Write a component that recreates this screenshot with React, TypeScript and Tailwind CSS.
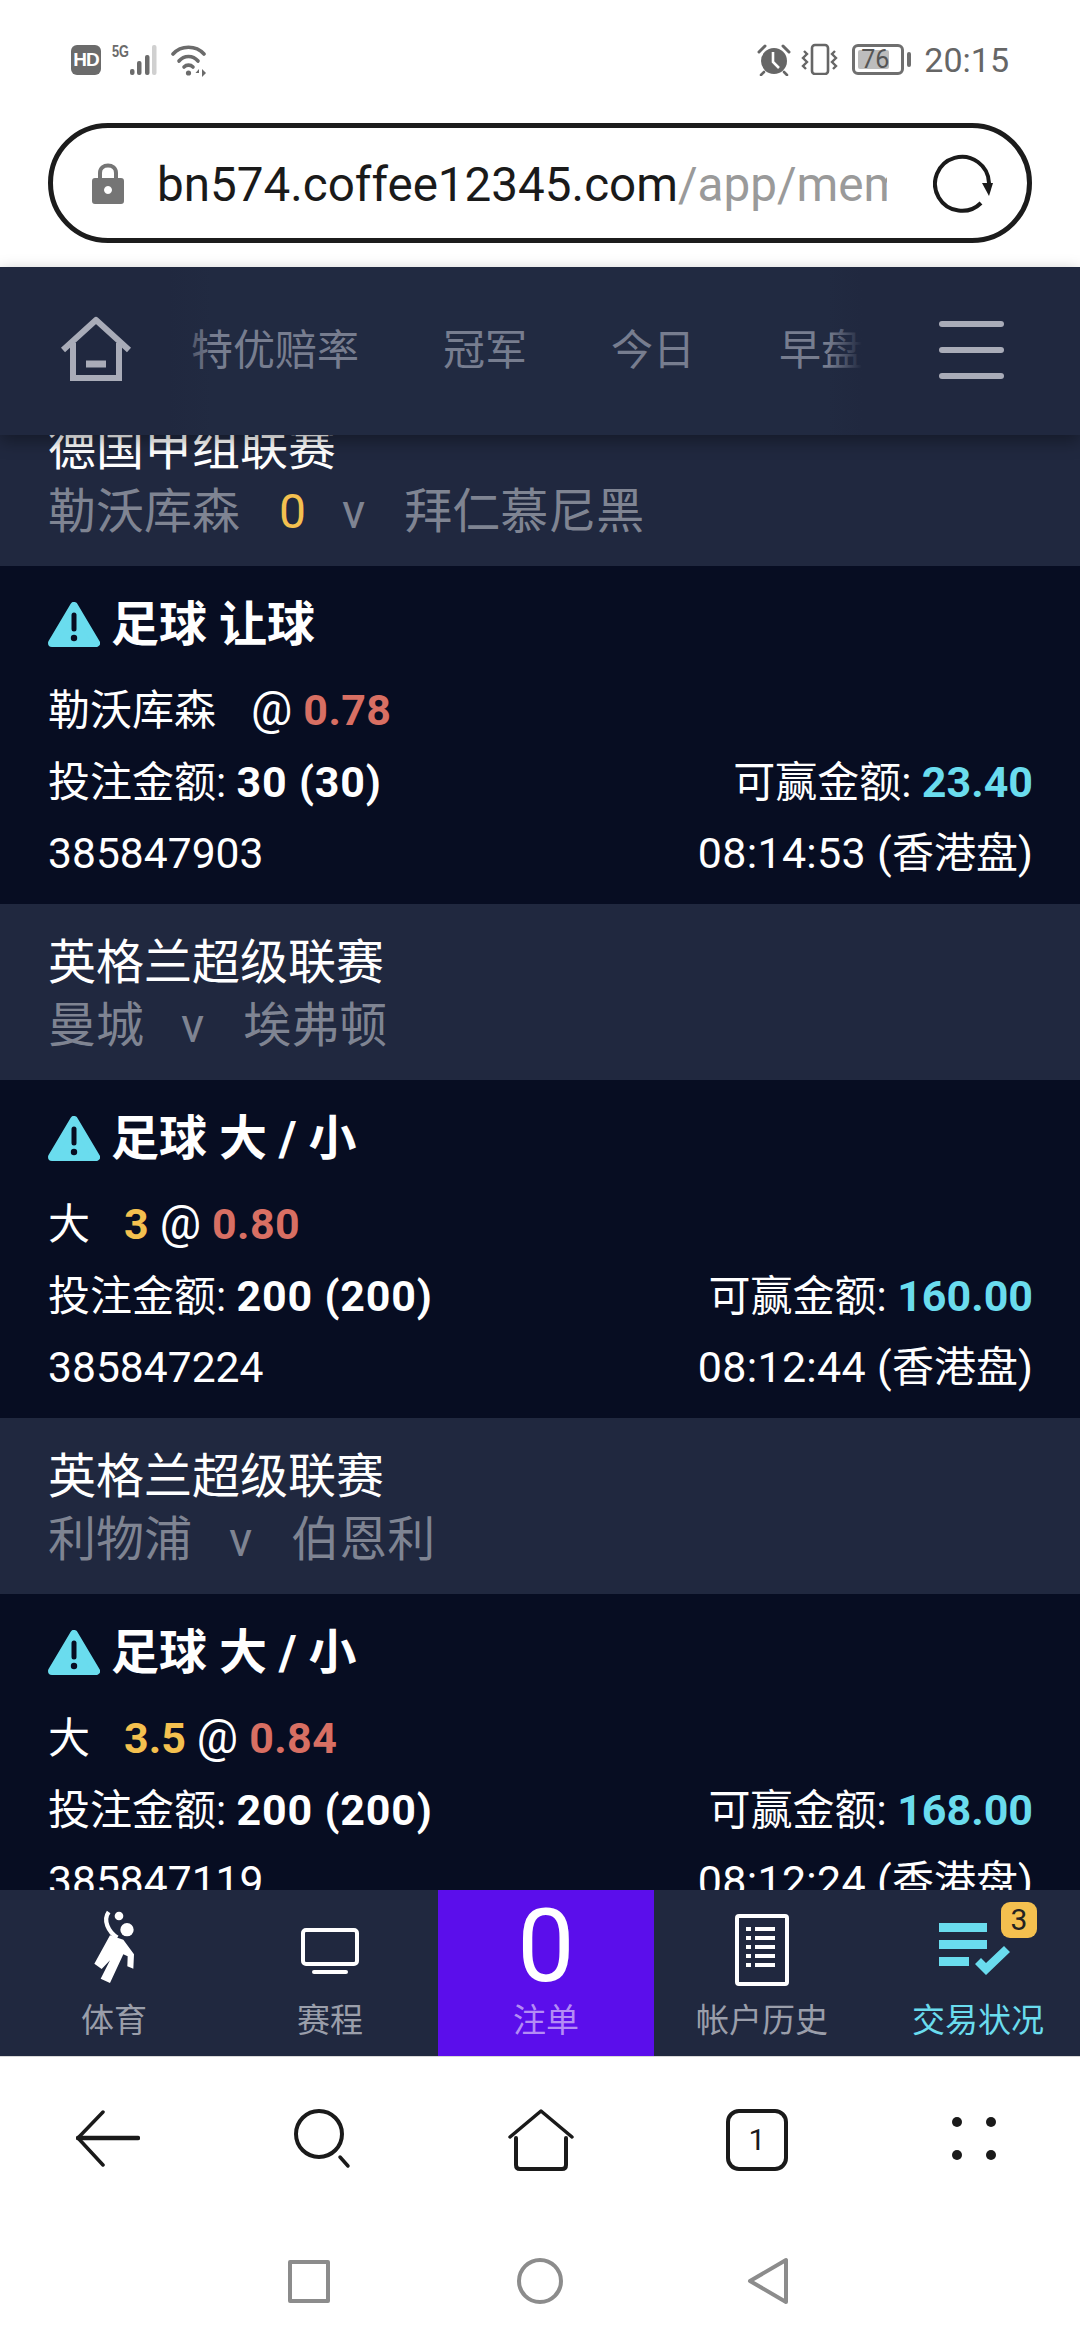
import React from 'react';

const cjk = "font-['Roboto','Noto_Sans_CJK_SC',sans-serif]";

type Bet = {
  league: string;
  home: string;
  hdpTop?: string;
  away: string;
  title: string;
  pick: string;
  hdp?: string;
  odds: string;
  stake: string;
  win: string;
  id: string;
  time: string;
};

const bets: Bet[] = [
  {
    league: '德国甲组联赛',
    home: '勒沃库森',
    hdpTop: '0',
    away: '拜仁慕尼黑',
    title: '足球 让球',
    pick: '勒沃库森',
    odds: '0.78',
    stake: '30 (30)',
    win: '23.40',
    id: '385847903',
    time: '08:14:53',
  },
  {
    league: '英格兰超级联赛',
    home: '曼城',
    away: '埃弗顿',
    title: '足球 大 / 小',
    pick: '大',
    hdp: '3',
    odds: '0.80',
    stake: '200 (200)',
    win: '160.00',
    id: '385847224',
    time: '08:12:44',
  },
  {
    league: '英格兰超级联赛',
    home: '利物浦',
    away: '伯恩利',
    title: '足球 大 / 小',
    pick: '大',
    hdp: '3.5',
    odds: '0.84',
    stake: '200 (200)',
    win: '168.00',
    id: '385847119',
    time: '08:12:24',
  },
];

const StatusBar = () => (
  <div className="h-[116px] shrink-0 flex items-start justify-between pl-[71px] pr-[71px] pt-[43px] text-[#666]">
    <div className="flex items-start">
      <div className="w-[30px] h-[30px] mt-[2px] rounded-[6px] bg-[#6b6b6b] text-white text-[19px] font-bold leading-[30px] text-center font-['Liberation_Sans',sans-serif] tracking-[-1px]">
        HD
      </div>
      <svg width="50" height="34" viewBox="0 0 50 34" className="ml-[11px]" fill="#6b6b6b">
        <text x="0" y="14" fontSize="17" fontWeight="700" fontFamily="Liberation Sans" textLength="17" lengthAdjust="spacingAndGlyphs">5G</text>
        <rect x="18" y="26" width="4.5" height="6" rx="2" />
        <rect x="25" y="18" width="4.5" height="14" rx="2" />
        <rect x="33" y="12" width="4.5" height="20" rx="2" />
        <rect x="40" y="2" width="4.5" height="30" rx="2" fill="#d0d0d0" />
      </svg>
      <svg width="38" height="34" viewBox="0 0 38 34" className="ml-[9px]" fill="none" stroke="#6b6b6b" strokeWidth="3.6" strokeLinecap="round">
        <path d="M2 11 C 10 2, 25 2, 33 11" />
        <path d="M8 18 C 13 12, 22 12, 27 18" />
        <path d="M13 24 C 15.5 21.5, 19.5 21.5, 22 24" />
        <circle cx="17.5" cy="30" r="2.6" fill="#6b6b6b" stroke="none" />
        <path d="M28 26 L24.5 30 L28 30 Z M31 34 L31 26 L35 30 Z" fill="#6b6b6b" stroke="none" />
      </svg>
    </div>
    <div className="flex items-start">
      <svg width="34" height="32" viewBox="0 0 34 32" className="mt-[1px]">
        <circle cx="17" cy="17" r="13" fill="#666" />
        <path d="M16 8 V18 L22 24" stroke="#fff" strokeWidth="2.6" fill="none" />
        <path d="M2 8 L8 2 M32 8 L26 2" stroke="#666" strokeWidth="3" strokeLinecap="round" />
        <path d="M7 28 L4 31 M27 28 L30 31" stroke="#666" strokeWidth="2.6" strokeLinecap="round" />
      </svg>
      <svg width="38" height="32" viewBox="0 0 38 32" className="ml-[10px]" fill="none" stroke="#666" strokeWidth="2.6">
        <rect x="11" y="2" width="16" height="29" rx="3" />
        <path d="M3 8 L6 11 L2 15 L6 19 L2 23 L5 26" strokeWidth="2.4" />
        <path d="M34 8 L31 11 L35 15 L31 19 L35 23 L32 26" strokeWidth="2.4" />
      </svg>
      <div className="ml-[13px] flex items-center h-[32px]">
        <div className="w-[52px] h-[31px] rounded-[6px] border-[3px] border-[#6f6f6f] p-[3px] relative">
          <div className="w-[31px] h-full bg-[#bdbdbd] rounded-[2px]" />
          <span className="absolute inset-0 text-center text-[25px] leading-[25px] text-[#555] font-['Roboto',sans-serif] pr-[6px]">76</span>
        </div>
        <div className="w-[4px] h-[15px] ml-[3px] rounded-[2px] bg-[#6f6f6f]" />
      </div>
      <span className="ml-[13px] text-[34px] leading-[34px] font-['Roboto',sans-serif] text-[#666]">20:15</span>
    </div>
  </div>
);

const AddressBar = () => (
  <div className="h-[151px] shrink-0 px-[48px] pt-[7px]">
    <div className="h-[120px] rounded-[60px] border-[5px] border-[#1c1c1c] flex items-center pl-[39px]">
      <svg width="32" height="41" viewBox="0 0 32 41" fill="#757575">
        <path d="M8 17 V10 C8 0, 24 0, 24 10 V17" fill="none" stroke="#757575" strokeWidth="4" />
        <path fillRule="evenodd" d="M3 15 H29 A3 3 0 0 1 32 18 V38 A3 3 0 0 1 29 41 H3 A3 3 0 0 1 0 38 V18 A3 3 0 0 1 3 15 Z M16 23 A4 4 0 1 0 16.01 23 Z" />
      </svg>
      <div className="ml-[33px] w-[730px] overflow-hidden whitespace-nowrap text-[47.6px] leading-[60px] pt-[3px] font-['Roboto',sans-serif] text-[#1a1a1a]">
        bn574.coffee12345.com<span className="text-[#9a9a9a]">/app/member</span>
      </div>
      <svg width="62" height="62" viewBox="0 0 62 62" className="ml-[46px] shrink-0" fill="none" stroke="#1a1a1a" strokeWidth="4">
        <path d="M56 31 A 27 27 0 1 0 48 51" />
        <path d="M49 31 L60 31 L56 44 Z" fill="#1a1a1a" stroke="none" />
      </svg>
    </div>
  </div>
);

const NavHeader = () => (
  <div className="h-[168px] shrink-0 flex items-center bg-[#20283f] shadow-[0_6px_16px_rgba(0,0,0,0.35)] relative z-10">
    <div className="w-[168px] h-full flex items-center pl-[60px] pb-[4px]">
      <svg width="72" height="66" viewBox="0 0 72 66" fill="none" stroke="#a9acb8" strokeWidth="6">
        <path d="M3 34 L36 4 L69 34" strokeLinejoin="round" />
        <path d="M13 27 V62 H59 V27" />
        <path d="M26 48 H46" strokeWidth="7" />
      </svg>
    </div>
    <div className="relative w-[694px] h-full overflow-hidden bg-[#212a41]">
      <div className={`flex items-center h-full gap-[84px] pl-[23px] pb-[2px] text-[42px] text-[#777d8f] whitespace-nowrap ${cjk}`}>
        <span>特优赔率</span>
        <span>冠军</span>
        <span>今日</span>
        <span>早盘</span>
      </div>
      <div className="absolute inset-y-0 left-0 w-[44px] bg-gradient-to-r from-[#20283f] to-transparent" />
      <div className="absolute inset-y-0 right-0 w-[34px] bg-gradient-to-l from-[#20283f] to-transparent" />
    </div>
    <div className="flex-1 flex flex-col items-center gap-[20px] pb-[3px]">
      <div className="w-[65px] h-[6px] rounded-[3px] bg-[#a9acb8]" />
      <div className="w-[65px] h-[6px] rounded-[3px] bg-[#a9acb8]" />
      <div className="w-[65px] h-[6px] rounded-[3px] bg-[#a9acb8]" />
    </div>
  </div>
);

const WarnIcon = () => (
  <svg width="52" height="46" viewBox="0 0 52 46" className="shrink-0">
    <path d="M26 4 L48 41 H4 Z" fill="#6adcee" stroke="#6adcee" strokeWidth="8" strokeLinejoin="round" />
    <path d="M26 13 V27" stroke="#070d22" strokeWidth="5" strokeLinecap="round" />
    <circle cx="26" cy="36" r="3.2" fill="#070d22" />
  </svg>
);

const BetRow = ({ bet }: { bet: Bet }) => (
  <>
    <div className="h-[176px] bg-[#20283f] pl-[48px] pt-[27px] text-[48px] leading-[63px]">
      <div className="text-white">{bet.league}</div>
      <div className="text-[#7f8492] flex whitespace-nowrap">
        <span>{bet.home}</span>
        {bet.hdpTop && <span className="ml-[39px] text-[#f4c04f]">{bet.hdpTop}</span>}
        <span className={bet.hdpTop ? 'ml-[36px]' : 'ml-[37px]'}>v</span>
        <span className="ml-[39px]">{bet.away}</span>
      </div>
    </div>
    <div className="h-[338px] bg-[#070d22] pl-[48px] pr-[47px] pt-[30px] text-[42px] leading-[71.7px] text-white">
      <div className="flex items-center h-[58px] gap-[11px] mb-[21px]">
        <WarnIcon />
        <span className="text-[48px] font-bold leading-[58px]">{bet.title}</span>
      </div>
      <div className="whitespace-nowrap">
        <span>{bet.pick}</span>
        {bet.hdp && <span className="ml-[34px] text-[43px] font-bold text-[#f4c04f]">{bet.hdp}</span>}
        <span className={bet.hdp ? 'ml-[11px] text-[46px] leading-[46px]' : 'ml-[35px] text-[46px] leading-[46px]'}>@</span>
        <span className="ml-[11px] text-[43px] font-bold tracking-[0.4px] text-[#d86f63]">{bet.odds}</span>
      </div>
      <div className="flex justify-between">
        <span>投注金额: <b className="text-[43px] tracking-[0.8px]">{bet.stake}</b></span>
        <span>可赢金额: <b className="text-[43px] text-[#6adcee]">{bet.win}</b></span>
      </div>
      <div className="flex justify-between">
        <span className="text-[42.6px]">{bet.id}</span>
        <span><span className="text-[43px] tracking-[0.3px]">{bet.time} (</span>香港盘<span className="text-[43px]">)</span></span>
      </div>
    </div>
  </>
);

const TabBar = () => (
  <div className={`h-[167px] shrink-0 grid grid-cols-[repeat(5,216px)] pl-[6px] overflow-hidden bg-[#20283f] border-b-[1px] border-[#d8d8d8] text-[33px] leading-[40px] text-[#9a9eaa] ${cjk}`}>
    <div className="flex flex-col items-center">
      <div className="h-[111px] flex items-end pb-[14px] pl-[2px]">
        <svg width="50" height="80" viewBox="90 30 150 240" fill="#fff">
          <circle cx="177" cy="57" r="13" />
          <circle cx="201" cy="98" r="20" />
          <path d="M146 45 C 128 70, 145 105, 172 122" fill="none" stroke="#fff" strokeWidth="13" />
          <path d="M150 115 L190 128 L222 172 L220 215 L202 208 L203 178 L190 172 L150 258 L122 245 L150 190 L125 216 L103 200 Z" />
        </svg>
      </div>
      <span>体育</span>
    </div>
    <div className="flex flex-col items-center">
      <div className="h-[111px] flex flex-col items-center pt-[38px]">
        <div className="w-[58px] h-[38px] rounded-[5px] border-[4px] border-white" />
        <div className="w-[36px] h-[4px] mt-[4px] rounded-[2px] bg-white" />
      </div>
      <span>赛程</span>
    </div>
    <div className="flex flex-col items-center bg-[#5b0eeb] text-[#b48cf5]">
      <div className="h-[111px] pt-[4px] text-[102px] leading-[104px] text-white font-['Roboto',sans-serif]">0</div>
      <span>注单</span>
    </div>
    <div className="flex flex-col items-center">
      <div className="h-[111px] flex items-start pt-[24px]">
        <svg width="54" height="72" viewBox="0 0 54 72" fill="#fff">
          <rect x="2" y="2" width="50" height="68" rx="2" fill="none" stroke="#fff" strokeWidth="4" />
          <rect x="11" y="13" width="5" height="4" /><rect x="20" y="13" width="20" height="4" />
          <rect x="11" y="22" width="5" height="4" /><rect x="20" y="22" width="20" height="4" />
          <rect x="11" y="31" width="5" height="4" /><rect x="20" y="31" width="20" height="4" />
          <rect x="11" y="40" width="5" height="4" /><rect x="20" y="40" width="20" height="4" />
          <rect x="11" y="49" width="5" height="4" /><rect x="20" y="49" width="20" height="4" />
        </svg>
      </div>
      <span>帐户历史</span>
    </div>
    <div className="flex flex-col items-center text-[#6adcee] relative">
      <div className="h-[111px] flex items-start pt-[33px] pr-[7px]">
        <svg width="72" height="56" viewBox="0 0 72 56" fill="#6adcee">
          <rect x="0" y="0" width="48" height="9" />
          <rect x="0" y="17" width="48" height="9" />
          <rect x="0" y="34" width="30" height="9" />
          <path d="M36 41 L42 35 L47 40 L65 23 L71 29 L47 52 Z" />
        </svg>
      </div>
      <span>交易状况</span>
      <div className="absolute top-[12px] right-[49px] w-[36px] h-[36px] rounded-[9px] bg-[#f4c04f] text-[#222] text-[30px] leading-[36px] text-center font-['Roboto',sans-serif]">3</div>
    </div>
  </div>
);

const BrowserBar = () => (
  <div className="h-[283px] shrink-0 bg-white flex flex-col">
    <div className="flex items-start h-[156px] pt-[52px] pl-[76px]">
      <svg width="64" height="60" viewBox="0 0 64 60" fill="none" stroke="#1a1a1a" strokeWidth="3.5" strokeLinecap="round">
        <path d="M27 3 L2 29 L27 56" />
        <path d="M2 29 H62" strokeWidth="4.5" />
      </svg>
      <svg width="60" height="60" viewBox="0 0 60 60" className="ml-[154px]" fill="none" stroke="#1a1a1a" strokeWidth="4" strokeLinecap="round">
        <circle cx="25" cy="25" r="23" />
        <path d="M46 48 L54 57" strokeWidth="3.5" />
      </svg>
      <svg width="66" height="62" viewBox="0 0 66 62" className="ml-[154px]" fill="none" stroke="#1a1a1a" strokeWidth="3.5" strokeLinecap="round" strokeLinejoin="round">
        <path d="M2 28 L33 2 L64 28" />
        <path d="M8 29 V56 Q8 60 12 60 H54 Q58 60 58 56 V29" strokeWidth="4" />
      </svg>
      <div className="ml-[152px] w-[62px] h-[62px] rounded-[13px] border-[4px] border-[#1a1a1a] flex items-center justify-center text-[30px] leading-[30px] text-[#1a1a1a] font-['Roboto',sans-serif]">1</div>
      <div className="ml-[164px] mt-[8px] grid grid-cols-2 gap-x-[24px] gap-y-[23px]">
        <div className="w-[10px] h-[10px] rounded-full bg-[#1a1a1a]" />
        <div className="w-[10px] h-[10px] rounded-full bg-[#1a1a1a]" />
        <div className="w-[10px] h-[10px] rounded-full bg-[#1a1a1a]" />
        <div className="w-[10px] h-[10px] rounded-full bg-[#1a1a1a]" />
      </div>
    </div>
    <div className="flex items-start pl-[288px] pt-[47px]">
      <div className="w-[42px] h-[43px] rounded-[2px] border-[4px] border-[#8c8c8c]" />
      <div className="ml-[187px] -mt-[2px] w-[46px] h-[46px] rounded-full border-[4px] border-[#8c8c8c]" />
      <svg width="42" height="48" viewBox="0 0 42 48" className="ml-[184px] -mt-[3px]" fill="none" stroke="#8c8c8c" strokeWidth="4" strokeLinejoin="round">
        <path d="M39 3 V45 L3 24 Z" />
      </svg>
    </div>
  </div>
);

export default function App() {
  return (
    <div className={`w-[1080px] h-[2340px] flex flex-col bg-white overflow-hidden ${cjk}`}>
      <StatusBar />
      <AddressBar />
      <NavHeader />
      <main className="h-[1455px] shrink-0 overflow-hidden">
        <div className="-mt-[45px]">
          {bets.map((b) => (
            <BetRow key={b.id} bet={b} />
          ))}
        </div>
      </main>
      <TabBar />
      <BrowserBar />
    </div>
  );
}
